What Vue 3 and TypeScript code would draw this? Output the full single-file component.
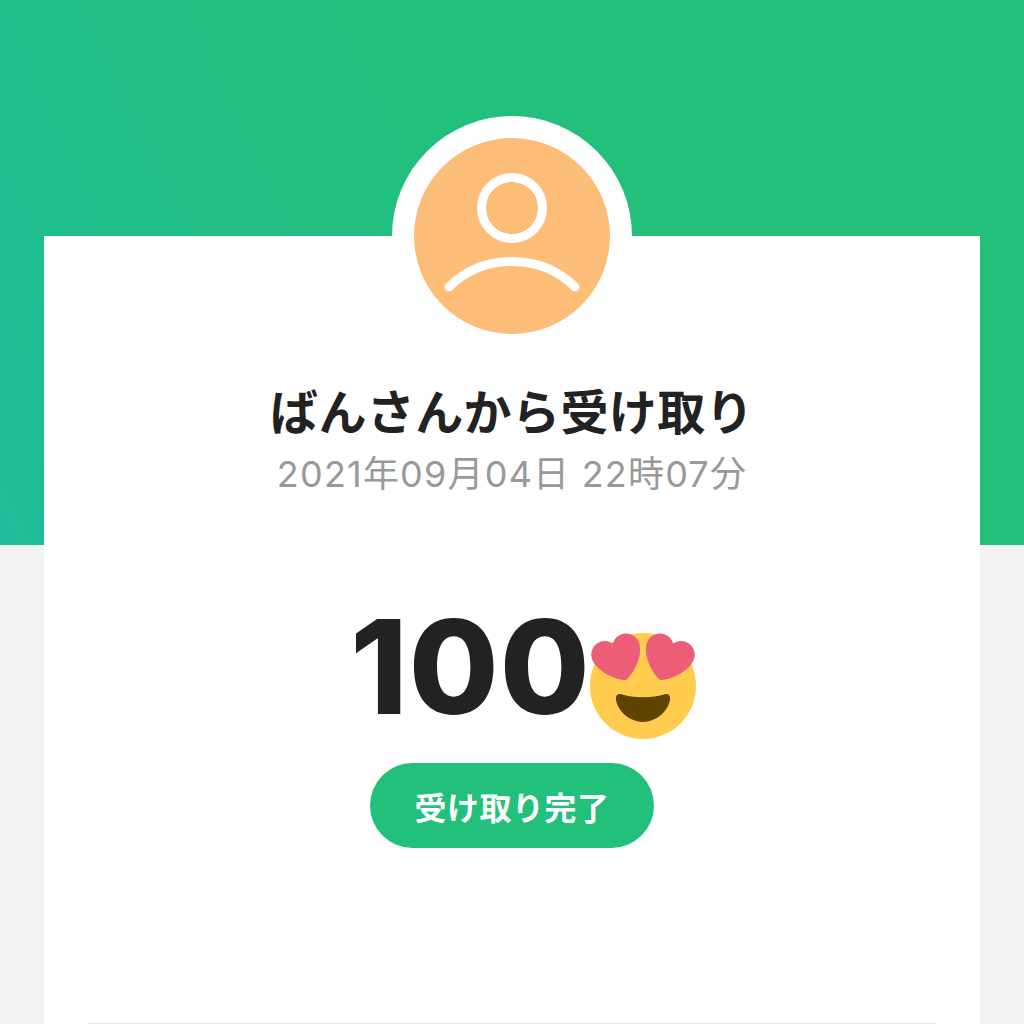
<script setup lang="ts">
const title = "ばんさんから受け取り";
const date = "2021年09月04日 22時07分";
const amount = "100";
const action = "受け取り完了";
</script>

<template>
  <main class="page">
    <div class="hero"></div>
    <section class="card">
      <div class="avatar-ring">
        <div class="avatar">
          <svg class="person" viewBox="0 0 196 196" fill="none" stroke="#fff" stroke-width="9" stroke-linecap="round">
            <circle cx="98" cy="70" r="30.500" />
            <path d="M35 149C51 133 73 123.500 98 123.500S145 133 161 149" />
          </svg>
        </div>
      </div>
      <h1 class="title">{{ title }}</h1>
      <p class="date">{{ date }}</p>
      <div class="amount-row">
        <span class="amount">{{ amount }}</span>
        <svg class="emoji" viewBox="0 0 36 36">
          <path fill="#FFCC4D" d="M36 18c0 9.941-8.059 18-18 18-9.94 0-18-8.059-18-18C0 8.06 8.06 0 18 0c9.941 0 18 8.06 18 18" />
          <path fill="#5F4300" d="M18 21.800c-3 0-5.300-.4-7.400-1-1-.3-1.800.3-1.800 1.300 0 3.500 4 8.100 9.200 8.100s9.200-4.600 9.200-8.100c0-1-.8-1.600-1.800-1.300-2.100.6-4.400 1-7.400 1" />
          <path fill="#EC5E78" d="M16.650 3.281C15.791.85 13.126-.426 10.694.431c-1.476.52-2.521 1.711-2.928 3.104-1.191-.829-2.751-1.1-4.225-.58C1.111 3.813-.167 6.48.692 8.911c.122.344.284.663.472.958 1.951 3.582 7.588 6.1 11.001 6.131 2.637-2.167 5.446-7.665 4.718-11.677-.038-.348-.113-.698-.233-1.042zm2.700 0C20.209.85 22.875-.426 25.306.431c1.476.52 2.521 1.711 2.929 3.104 1.191-.829 2.751-1.1 4.224-.58 2.431.858 3.708 3.525 2.850 5.956-.122.344-.284.663-.472.958-1.951 3.582-7.588 6.100-11.002 6.131-2.637-2.167-5.445-7.665-4.717-11.677.037-.348.112-.698.232-1.042z" />
        </svg>
      </div>
      <button class="action" type="button">{{ action }}</button>
      <div class="divider"></div>
    </section>
  </main>
</template>

<style>
html, body { margin: 0; background: #f2f2f2; }
</style>

<style scoped>
.page {
  height: 1024px;
  overflow: hidden;
  background: #f2f2f2;
  font-family: Inter, "Noto Sans CJK JP", sans-serif;
}
.hero {
  height: 545px;
  background: linear-gradient(65deg, #1fbd9a 0%, #21bf84 30%, #22c07a 60%, #22c07a 100%);
}
.card {
  margin: -309px 44px 0;
  height: 788px;
  box-sizing: border-box;
  background: #fff;
  display: flex;
  flex-direction: column;
  align-items: center;
}
.avatar-ring {
  margin-top: -120px;
  width: 240px;
  height: 240px;
  box-sizing: border-box;
  padding: 22px;
  border-radius: 50%;
  background: #fff;
}
.avatar {
  width: 196px;
  height: 196px;
  border-radius: 50%;
  background: #fbbd78;
}
.person { display: block; width: 196px; height: 196px; }
.title {
  margin: 22px 0 0;
  font-size: 48px;
  line-height: 70px;
  font-weight: 700;
  letter-spacing: 0.4px;
  color: #222;
  white-space: nowrap;
}
.date {
  margin: 2px 0 0;
  font-size: 36px;
  line-height: 48px;
  font-weight: 400;
  letter-spacing: 1.2px;
  color: #999;
  white-space: nowrap;
}
.amount-row {
  margin: 103px 0 0 22px;
  display: flex;
  align-items: flex-start;
  height: 141px;
}
.amount {
  font-size: 130px;
  line-height: 132px;
  font-weight: 800;
  letter-spacing: 1px;
  color: #222;
}
.emoji { width: 106px; height: 106px; margin: 32px 0 0 -1px; }
.action {
  margin-top: 21px;
  width: 284px;
  height: 85px;
  border: 0;
  border-radius: 43px;
  background: #22c07a;
  color: #fff;
  font-family: inherit;
  font-size: 32px;
  letter-spacing: 0.5px;
  font-weight: 700;
}
.divider {
  margin-top: 175px;
  width: 848px;
  height: 1px;
  background: #e4e4e4;
}
</style>
